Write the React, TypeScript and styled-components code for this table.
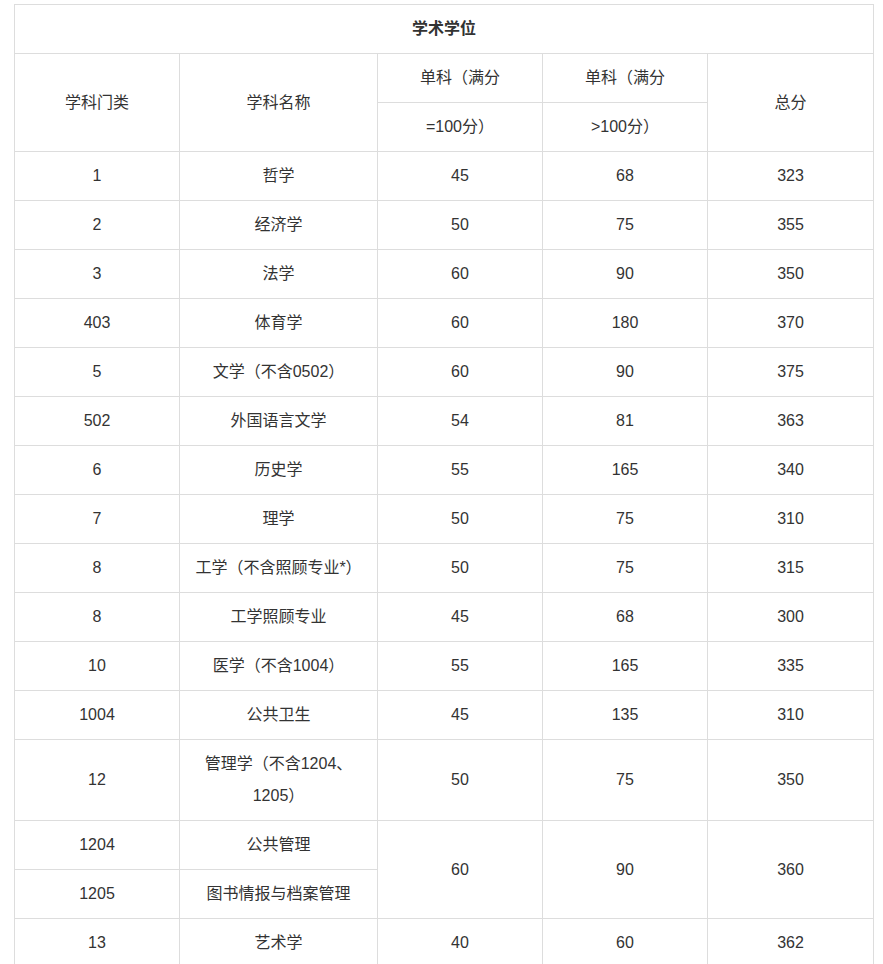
import React from "react";
import styled, { createGlobalStyle } from "styled-components";

const GlobalStyle = createGlobalStyle`
  html, body {
    margin: 0;
    padding: 0;
    background: #ffffff;
  }
  body {
    font-family: "Liberation Sans", Arial, "Noto Sans CJK SC", sans-serif;
    color: #333333;
  }
`;

const Page = styled.div`
  padding: 4px 0 0 14px;
`;

const Table = styled.table`
  width: 860px;
  table-layout: fixed;
  border-collapse: collapse;
  font-size: 16px;
  color: #333333;
`;

const Cell = styled.td<{ $bold?: boolean }>`
  border: 1px solid #dddddd;
  padding: 8px;
  line-height: 32px;
  text-align: center;
  vertical-align: middle;
  font-weight: ${(p) => (p.$bold ? 700 : 400)};
  word-break: normal;
`;

type Row = {
  code: string;
  name: string;
  a?: string;
  b?: string;
  total?: string;
  span?: number;
};

const rows: Row[] = [
  { code: "1", name: "哲学", a: "45", b: "68", total: "323" },
  { code: "2", name: "经济学", a: "50", b: "75", total: "355" },
  { code: "3", name: "法学", a: "60", b: "90", total: "350" },
  { code: "403", name: "体育学", a: "60", b: "180", total: "370" },
  { code: "5", name: "文学（不含0502）", a: "60", b: "90", total: "375" },
  { code: "502", name: "外国语言文学", a: "54", b: "81", total: "363" },
  { code: "6", name: "历史学", a: "55", b: "165", total: "340" },
  { code: "7", name: "理学", a: "50", b: "75", total: "310" },
  { code: "8", name: "工学（不含照顾专业*）", a: "50", b: "75", total: "315" },
  { code: "8", name: "工学照顾专业", a: "45", b: "68", total: "300" },
  { code: "10", name: "医学（不含1004）", a: "55", b: "165", total: "335" },
  { code: "1004", name: "公共卫生", a: "45", b: "135", total: "310" },
  { code: "12", name: "管理学（不含1204、1205）", a: "50", b: "75", total: "350" },
  { code: "1204", name: "公共管理", a: "60", b: "90", total: "360", span: 2 },
  { code: "1205", name: "图书情报与档案管理" },
  { code: "13", name: "艺术学", a: "40", b: "60", total: "362" },
];

export default function App() {
  return (
    <>
      <GlobalStyle />
      <Page>
        <Table>
          <colgroup>
            <col style={{ width: 165 }} />
            <col style={{ width: 198 }} />
            <col style={{ width: 165 }} />
            <col style={{ width: 165 }} />
            <col style={{ width: 166 }} />
          </colgroup>
          <tbody>
            <tr>
              <Cell colSpan={5} $bold>
                学术学位
              </Cell>
            </tr>
            <tr>
              <Cell rowSpan={2}>学科门类</Cell>
              <Cell rowSpan={2}>学科名称</Cell>
              <Cell>单科（满分</Cell>
              <Cell>单科（满分</Cell>
              <Cell rowSpan={2}>总分</Cell>
            </tr>
            <tr>
              <Cell>=100分）</Cell>
              <Cell>&gt;100分）</Cell>
            </tr>
            {rows.map((r, i) => (
              <tr key={i}>
                <Cell>{r.code}</Cell>
                <Cell>{r.name}</Cell>
                {r.a !== undefined && <Cell rowSpan={r.span}>{r.a}</Cell>}
                {r.b !== undefined && <Cell rowSpan={r.span}>{r.b}</Cell>}
                {r.total !== undefined && (
                  <Cell rowSpan={r.span}>{r.total}</Cell>
                )}
              </tr>
            ))}
          </tbody>
        </Table>
      </Page>
    </>
  );
}
